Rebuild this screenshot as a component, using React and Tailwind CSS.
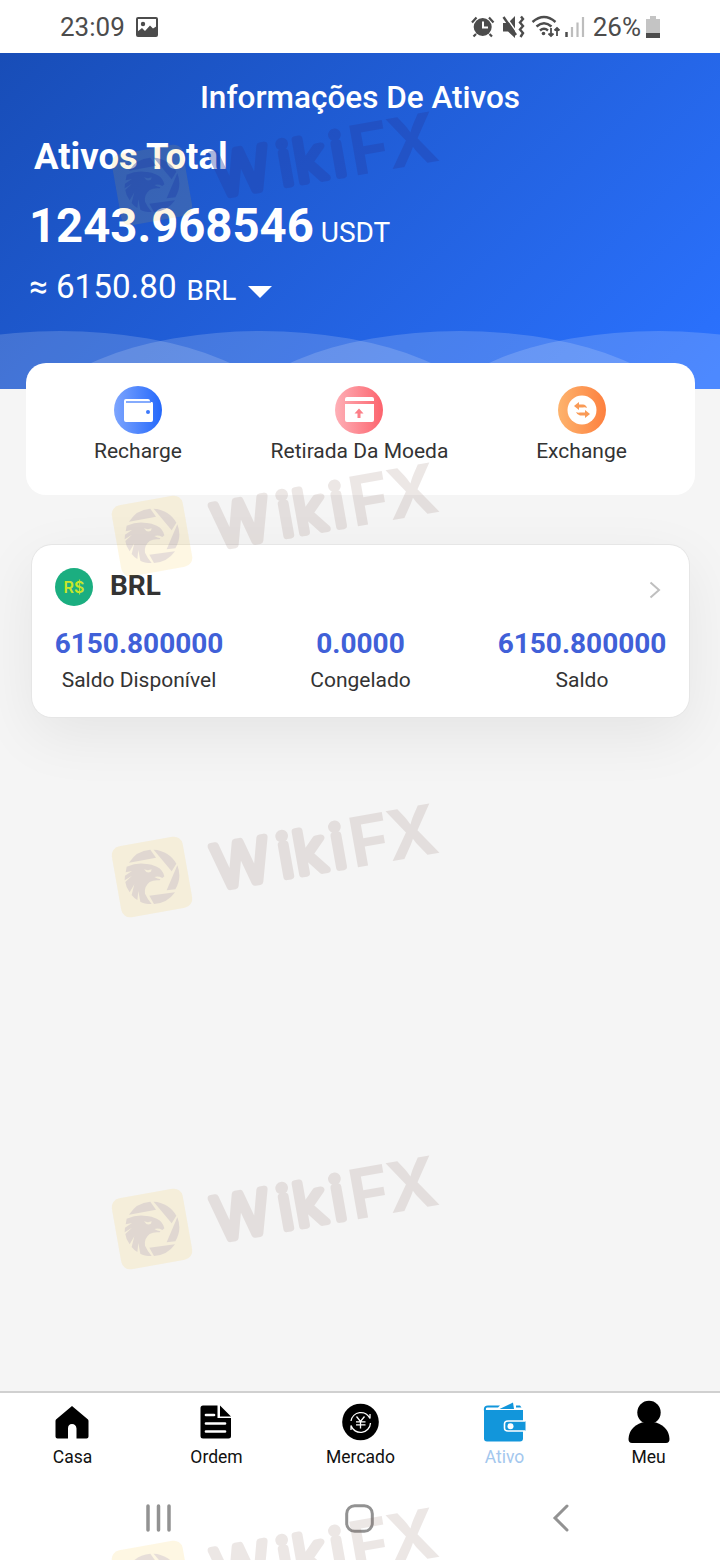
import React from "react";

const WATERMARKS = [
  { id: "wm-1", top: "top-[85px]", ink: "#2440a8", eagle: "#1c3ca8", inkOpacity: 0.38 },
  { id: "wm-2", top: "top-[436px]" },
  { id: "wm-3", top: "top-[777px]" },
  { id: "wm-4", top: "top-[1129px]" },
  { id: "wm-5", top: "top-[1481px]" },
];

const BALANCES = [
  { label: "Saldo Disponível", value: "6150.800000" },
  { label: "Congelado", value: "0.0000" },
  { label: "Saldo", value: "6150.800000" },
];

const Watermark = ({ top, ink = "#7d5a50", eagle = "#6450a0", inkOpacity = 0.14 }) => (
  <svg className={`pointer-events-none absolute left-0 ${top}`} width="460" height="200" viewBox="0 0 460 200">
    <g transform="translate(152 100) rotate(-10)">
      <rect x="-36" y="-36" width="72" height="72" rx="9" fill="#f8be15" opacity="0.12" />
    </g>
    <g transform="translate(152 100) scale(0.3333) translate(-132 -136)" fill={eagle} opacity={inkOpacity}>
      <path d="M63 93A82 82 0 0 1 127 54L144 78Z" />
      <path d="M137 54A82 82 0 0 1 205 96L191 119Z" />
      <path d="M208 101A82 82 0 0 1 202 173L176 176Z" />
      <path d="M201 182A82 82 0 0 1 138 217L124 192Z" />
      <path d="M56 105Q88 92 114 97Q128 96 146 105Q164 112 169 134L163 139Q151 132 139 136Q148 142 157 143L155 146Q136 144 125 151Q107 165 111 186Q120 205 131 217Q108 217 97 210L91 178L88 205Q78 199 71 190L79 158L65 182Q54 168 52 151L72 132L50 146L51 132L72 118L53 122ZM108 113Q116 127 129 120L131 113Q120 118 108 113Z" fillRule="evenodd" />
    </g>
    <g
      transform="translate(152 100) rotate(-10)"
      fill={ink}
      stroke={ink}
      strokeLinejoin="round"
      opacity={inkOpacity}
      fontFamily="Inter, sans-serif"
    >
      <text x="62 128 144 181.500" y="23" fontSize="59" fontWeight="300" strokeWidth="7">Wiki</text>
      <text x="200 238" y="26" fontSize="69" fontWeight="700" strokeWidth="0">FX</text>
    </g>
  </svg>
);

const StatusBar = () => (
  <div className="flex h-[53px] items-center bg-white pl-[60px] pr-[60px] text-[26px] text-[#4c4c4c]">
    <span className="translate-y-px">23:09</span>
    <svg className="ml-[11px]" width="22" height="20" viewBox="0 0 22 20">
      <rect x="1" y="1" width="20" height="18" rx="1" fill="none" stroke="#4c4c4c" strokeWidth="2" />
      <circle cx="7" cy="7" r="2.200" fill="#4c4c4c" />
      <path d="M1 15L6 11L9 14L14 8.500L17 11.500L21 9V19H1Z" fill="#4c4c4c" />
    </svg>
    <svg className="ml-auto" width="116" height="28" viewBox="0 0 116 28">
      <path d="M2 9.500L6.500 4.500M23.500 9.500L19 4.500M6 21L3.500 23.500M19.500 21L22 23.500" stroke="#4c4c4c" strokeWidth="2.200" />
      <circle cx="12.700" cy="14" r="9" fill="#4c4c4c" />
      <path d="M13 8.500V14.500H18" fill="none" stroke="#fff" strokeWidth="2" />
      <path d="M33 10H38L45 3V25L38 18.500H33Z" fill="#4c4c4c" />
      <path d="M35 2.500L49 22.500" stroke="#fff" strokeWidth="1.500" />
      <path d="M33.500 4L46 22" stroke="#4c4c4c" strokeWidth="2.400" />
      <path d="M51 3.500L53 6L50 9.500L53 13L50 16.500L53 20L50.500 24" fill="none" stroke="#4c4c4c" strokeWidth="2.400" />
      <g fill="none" stroke="#4c4c4c" strokeWidth="2.400">
        <path d="M62.500 9Q74 -1 85.500 9M66.500 13.500Q74 7 81.500 13.500M70 17.500Q74 14 78 17.500" />
      </g>
      <circle cx="73.500" cy="20.500" r="1.800" fill="#4c4c4c" />
      <path d="M81 15V23M78.500 20.500L81 23L83.500 20.500M87 23V15M84.500 17.500L87 15L89.500 17.500" fill="none" stroke="#4c4c4c" strokeWidth="1.800" />
      <path d="M96.500 19V24" stroke="#4c4c4c" strokeWidth="2.500" />
      <path d="M102 14V24M107.500 9.500V24M113 4V24" stroke="#bdbdbd" strokeWidth="2.200" />
    </svg>
    <span className="ml-[7px] translate-y-px">26%</span>
    <svg className="ml-[5px]" width="14" height="22" viewBox="0 0 14 22">
      <path d="M4 0H10V3H14V22H0V3H4Z" fill="#c4c4c4" />
      <rect y="17" width="14" height="5" fill="#4c4c4c" />
    </svg>
  </div>
);

const HeaderWaves = () => (
  <svg className="absolute bottom-0 left-0" width="720" height="60" viewBox="0 0 720 60" fill="#fff" fillOpacity="0.165">
    <ellipse cx="60" cy="100" rx="230" ry="98" />
    <ellipse cx="261" cy="100" rx="230" ry="98" />
    <ellipse cx="460" cy="100" rx="230" ry="98" />
    <ellipse cx="659" cy="100" rx="230" ry="98" />
  </svg>
);

const AssetsHeader = () => (
  <header className="relative h-[336px] bg-[linear-gradient(135deg,#184db7_0%,#2b72ff_98%)] text-white">
    <HeaderWaves />
    <h1 className="pt-[25px] text-center text-[31.500px] font-medium leading-[40px]">Informações De Ativos</h1>
    <h2 className="ml-[34px] mt-[17px] text-[36.500px] font-bold leading-[44px]">Ativos Total</h2>
    <p className="ml-[29px] mt-[17px] flex items-baseline leading-[60px]">
      <span className="text-[47.250px] font-bold">1243.968546</span>
      <span className="ml-[7px] text-[28px]">USDT</span>
    </p>
    <div className="ml-[29px] mt-px flex items-baseline leading-[46px]">
      <span className="text-[33.200px]">≈ 6150.80</span>
      <span className="ml-[10px] translate-y-[2px] text-[28px]">BRL</span>
      <svg className="ml-[12px]" width="24" height="12" viewBox="0 0 24 12">
        <path d="M0 0H24L12 12Z" fill="#fff" />
      </svg>
    </div>
  </header>
);

const RechargeIcon = () => (
  <svg width="48" height="48" viewBox="0 0 48 48">
    <defs>
      <linearGradient id="recharge">
        <stop stopColor="#7da5fe" />
        <stop offset="1" stopColor="#2468fb" />
      </linearGradient>
    </defs>
    <circle cx="24" cy="24" r="24" fill="url(#recharge)" />
    <path d="M12 13H34Q36 13 36 15V16H38Q39 16 39 18V34Q39 36 37 36H12Q10 36 10 34V15Q10 13 12 13Z" fill="#fff" />
    <path d="M12 16H37" stroke="#5c8ffd" strokeWidth="1.500" />
    <circle cx="34" cy="26" r="2" fill="#3d79fc" />
  </svg>
);

const WithdrawIcon = () => (
  <svg className="-translate-x-px" width="48" height="48" viewBox="0 0 48 48">
    <defs>
      <linearGradient id="withdraw">
        <stop stopColor="#feb0b7" />
        <stop offset="1" stopColor="#fc636d" />
      </linearGradient>
    </defs>
    <circle cx="24" cy="24" r="24" fill="url(#withdraw)" />
    <path d="M10 15V13Q10 11 12 11H37Q39 11 39 13V15ZM10 18H39V34Q39 36 37 36H12Q10 36 10 34Z" fill="#fff" />
    <path d="M24 22.500L28.500 27.500H25.500V32H22.500V27.500H19.500Z" fill="#fc7f88" />
  </svg>
);

const ExchangeIcon = () => (
  <svg width="48" height="48" viewBox="0 0 48 48">
    <defs>
      <linearGradient id="exchange">
        <stop stopColor="#fdb36d" />
        <stop offset="1" stopColor="#fd803f" />
      </linearGradient>
    </defs>
    <circle cx="24" cy="24" r="24" fill="url(#exchange)" />
    <circle cx="24" cy="24" r="14.500" fill="#fff" />
    <path d="M16 20L21 16V18.500H25Q28 18.500 29 22Q27 21 25 21.500H21V24ZM32 28L27 32V29.500H22Q19 29 18 26Q20 27 22 26.500H27V24Z" fill="#f99a56" />
  </svg>
);

const ACTIONS = [
  { label: "Recharge", icon: RechargeIcon },
  { label: "Retirada Da Moeda", icon: WithdrawIcon },
  { label: "Exchange", icon: ExchangeIcon },
];

const ActionsCard = () => (
  <section className="relative z-10 ml-[26px] mt-[-26px] grid h-[132px] w-[669px] grid-cols-[222px_221px_223px] rounded-[20px] bg-white pl-px pt-[23px]">
    {ACTIONS.map(({ label, icon: Icon }) => (
      <div key={label} className="flex flex-col items-center">
        <Icon />
        <span className="mt-[3px] text-[21px] leading-[28px] text-[#333]">{label}</span>
      </div>
    ))}
  </section>
);

const BalanceCard = () => (
  <section className="ml-[32px] mt-[50px] h-[172px] w-[657px] rounded-[20px] bg-white px-[23px] pt-[22px] shadow-[0_0_0_1px_#e6e6e6,0_18px_60px_rgba(0,0,0,0.07)]">
    <div className="flex h-[40px] items-center">
      <div className="flex size-[38px] items-center justify-center rounded-full bg-[#1bae80] font-['Inter'] text-[16px] font-semibold text-[#c8e62a]">
        R$
      </div>
      <span className="ml-[17px] -translate-y-px text-[28px] font-bold leading-[34px] text-[#333]">BRL</span>
      <svg className="ml-auto mr-[5px] mt-[6px]" width="12" height="18" viewBox="0 0 12 18">
        <path d="M1.500 1.500L10 9L1.500 16.500" fill="none" stroke="#bfbfbf" strokeWidth="2" />
      </svg>
    </div>
    <div className="mt-[19px] flex justify-between">
      {BALANCES.map(({ label, value }) => (
        <div key={label} className="flex w-[168px] flex-col items-center">
          <span className="text-[28px] font-bold leading-[36px] text-[#4060d8]">{value}</span>
          <span className="mt-[5px] text-[21px] leading-[26px] text-[#333]">{label}</span>
        </div>
      ))}
    </div>
  </section>
);

const HomeIcon = () => (
  <svg width="44" height="44" viewBox="0 0 44 44">
    <path d="M22 6L38 19.500Q38.500 20 38.500 21V36.500Q38.500 38.500 36.500 38.500H26.500V28.500Q26 24 22 24T18 28.500V38.500H7.500Q5.500 38.500 5.500 36.500V21Q5.500 20 6 19.500Z" />
  </svg>
);

const OrderIcon = () => (
  <svg width="44" height="44" viewBox="0 0 44 44">
    <path d="M9 5.500H23.500V18H37V36Q37 38.500 34.500 38.500H9Q6.500 38.500 6.500 36V8Q6.500 5.500 9 5.500ZM26 5.500L37 16.500H26Z" />
    <path d="M12 15H20M12 23.500H31M12 31.500H31" stroke="#fff" strokeWidth="2.700" strokeLinecap="round" />
  </svg>
);

const MarketIcon = () => (
  <svg width="44" height="44" viewBox="0 0 44 44">
    <circle cx="22.500" cy="22" r="18.300" />
    <g fill="none" stroke="#fff" strokeWidth="1.300">
      <path d="M13 21A10 10 0 0 1 32 18.500V14M32.500 23A10 10 0 0 1 13 25.500V30" />
      <path d="M18.500 16.500L22.500 21.500L26.500 16.500M22.500 21.500V28.500M18 21.800H27.500M18 24.800H27.500" />
    </g>
  </svg>
);

const AssetIcon = () => (
  <svg width="44" height="44" viewBox="0 0 44 44" fill="#1296db">
    <path d="M2 11Q1 5.500 6 5.500H18L16 7.500H5Q3.500 8 4 10H41V38.500Q41 41.500 38 41.500H5Q2 41.500 2 38.500Z" />
    <path d="M17.500 9L31 2.500L32 9ZM34 5.500H38L39.500 7.500H34Z" />
    <path d="M43.500 21H26Q22.500 21 22.500 24V28Q22.500 31 26 31H43.500" stroke="#fff" strokeWidth="1.600" />
    <circle cx="28.500" cy="26.200" r="3" fill="#fff" />
  </svg>
);

const ProfileIcon = () => (
  <svg width="44" height="44" viewBox="0 0 44 44">
    <circle cx="23" cy="12.500" r="11.700" />
    <path d="M16 22.500H30Q43 27 43.500 39Q43.500 43 40 43H6Q2.500 43 2.500 39Q3 27 16 22.500Z" />
  </svg>
);

const TABS = [
  { label: "Casa", icon: HomeIcon },
  { label: "Ordem", icon: OrderIcon },
  { label: "Mercado", icon: MarketIcon },
  { label: "Ativo", icon: AssetIcon, active: true },
  { label: "Meu", icon: ProfileIcon },
];

const TabBar = () => (
  <nav className="grid h-[86px] grid-cols-5 border-t-2 border-[#d0d0d0] bg-white pt-[7px]">
    {TABS.map(({ label, icon: Icon, active }) => (
      <div key={label} className="flex flex-col items-center">
        <Icon />
        <span className={`ml-px mt-px text-[17.500px] leading-[24px] ${active ? "text-[#a3c7ee]" : "text-[#111]"}`}>{label}</span>
      </div>
    ))}
  </nav>
);

const SystemNav = () => (
  <div className="flex h-[83px] bg-white pl-[145px] pt-[27px]">
    <svg width="27" height="28" viewBox="0 0 27 28">
      <path d="M3 2V26M13.500 2V26M24 2V26" stroke="#929292" strokeWidth="3.500" strokeLinecap="round" />
    </svg>
    <svg className="ml-[173px]" width="29" height="29" viewBox="0 0 29 29">
      <rect x="1.700" y="1.700" width="25.600" height="25.600" rx="8" fill="none" stroke="#929292" strokeWidth="3" />
    </svg>
    <svg className="ml-[178px]" width="18" height="28" viewBox="0 0 18 28">
      <path d="M15 2L3 14L15 26" fill="none" stroke="#929292" strokeWidth="3" strokeLinecap="round" />
    </svg>
  </div>
);

export default function App() {
  return (
    <div className="relative flex h-[1560px] w-[720px] flex-col overflow-hidden bg-[#f5f5f5] font-['Roboto',sans-serif]">
      <StatusBar />
      <AssetsHeader />
      <ActionsCard />
      <BalanceCard />
      <div className="mt-auto">
        <TabBar />
        <SystemNav />
      </div>
      <div className="pointer-events-none absolute inset-0 z-20 overflow-hidden">
        {WATERMARKS.map(({ id, ...mark }) => (
          <Watermark key={id} {...mark} />
        ))}
      </div>
    </div>
  );
}
